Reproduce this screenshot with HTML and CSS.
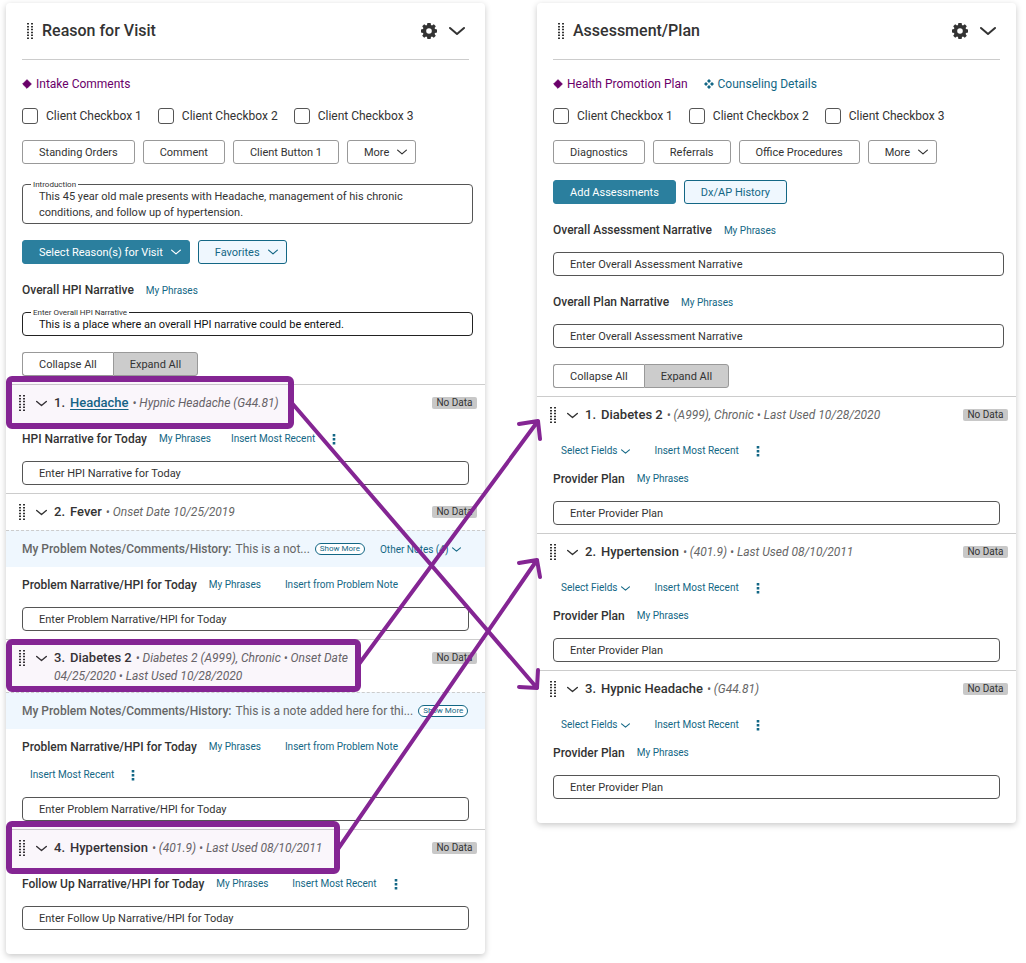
FILE: index.html
```html
<!DOCTYPE html>
<html lang="en">
<head>
  <meta charset="UTF-8">
  <meta name="viewport" content="width=device-width, initial-scale=1.0">
  <title>Reason for Visit - Assessment/Plan</title>
  <link rel="stylesheet" href="styles.css">
</head>
<body>

  <!-- Shared icons -->
  <svg class="sprite" aria-hidden="true">
    <symbol id="drag" viewBox="0 0 6 16">
      <path d="M1 0v16M5 0v16" stroke="currentColor" stroke-width="2" stroke-dasharray="1.6 1.28" fill="none"/>
    </symbol>
    <symbol id="chevron" viewBox="0 0 16 16">
      <path d="M1 5l7 6 7-6" fill="none" stroke="currentColor" stroke-width="2" stroke-linecap="round" stroke-linejoin="round"/>
    </symbol>
    <symbol id="gear" viewBox="0 0 16 16">
      <path fill="currentColor" fill-rule="evenodd" d="M6.4 0h3.2l.4 2 1 .4 1.8-1.2 2 2L13.6 5l.4 1 2 .4v3.2l-2 .4-.4 1 1.2 1.8-2 2-1.8-1.2-1 .4-.4 2H6.4L6 14l-1-.4-1.8 1.2-2-2L2.4 11 2 10l-2-.4V6.4L2 6l.4-1-1.2-1.8 2-2L5 2.4 6 2zM8 5.2a2.8 2.8 0 1 0 0 5.6 2.8 2.8 0 0 0 0-5.6z"/>
    </symbol>
    <symbol id="diamond" viewBox="0 0 10 10">
      <path fill="currentColor" stroke="currentColor" stroke-linejoin="round" d="M5 .7L9.3 5 5 9.3.7 5z"/>
    </symbol>
    <symbol id="diamonds" viewBox="0 0 10 10">
      <path fill="currentColor" d="M5 0l2 2-2 2-2-2zM8 3l2 2-2 2-2-2zM5 6l2 2-2 2-2-2zM2 3l2 2-2 2-2-2z"/>
    </symbol>
    <symbol id="kebab" viewBox="0 0 4 12">
      <path fill="currentColor" d="M.7 1h2.6v2.4H.7zM.7 5h2.6v2.4H.7zM.7 9h2.6v2.4H.7z"/>
    </symbol>
  </svg>

  <main class="board">

    <!-- Reason for Visit -->
    <section class="panel">
      <header class="panel-header">
        <svg class="drag"><use href="#drag"/></svg>
        <h1>Reason for Visit</h1>
        <button class="icon-btn" aria-label="Settings"><svg><use href="#gear"/></svg></button>
        <button class="icon-btn" aria-label="Collapse panel"><svg><use href="#chevron"/></svg></button>
      </header>

      <div class="panel-body">
        <div class="tags">
          <a href="#" class="tag purple"><svg><use href="#diamond"/></svg>Intake Comments</a>
        </div>
        <div class="checks">
          <label><input type="checkbox">Client Checkbox 1</label>
          <label><input type="checkbox">Client Checkbox 2</label>
          <label><input type="checkbox">Client Checkbox 3</label>
        </div>
        <div class="buttons">
          <button class="btn">Standing Orders</button>
          <button class="btn">Comment</button>
          <button class="btn">Client Button 1</button>
          <button class="btn has-menu">More<svg><use href="#chevron"/></svg></button>
        </div>
        <div class="field intro">
          <label for="introduction">Introduction</label>
          <textarea id="introduction" rows="2">This 45 year old male presents with Headache, management of his chronic conditions, and follow up of hypertension.</textarea>
        </div>
        <div class="buttons">
          <button class="btn primary has-menu">Select Reason(s) for Visit<svg><use href="#chevron"/></svg></button>
          <button class="btn secondary has-menu">Favorites<svg><use href="#chevron"/></svg></button>
        </div>
        <div class="narrative">
          <div class="narrative-title"><h2>Overall HPI Narrative</h2><a href="#" class="link">My Phrases</a></div>
          <div class="field dark">
            <label for="overall-hpi">Enter Overall HPI Narrative</label>
            <input type="text" id="overall-hpi" value="This is a place where an overall HPI narrative could be entered.">
          </div>
        </div>
        <div class="toggle">
          <button class="btn">Collapse All</button>
          <button class="btn selected">Expand All</button>
        </div>
      </div>

      <article class="item">
        <div class="item-head">
          <svg class="drag"><use href="#drag"/></svg>
          <button class="expand" aria-label="Toggle Headache"><svg><use href="#chevron"/></svg></button>
          <p class="item-text"><b>1.</b><a href="#" class="name">Headache</a> <i>• Hypnic Headache (G44.81)</i></p>
          <span class="badge">No Data</span>
        </div>
        <div class="tools tight">
          <label class="title" for="hpi-1">HPI Narrative for Today</label>
          <a href="#" class="link">My Phrases</a>
          <span class="insert"><a href="#" class="link">Insert Most Recent</a><button class="kebab" aria-label="More actions"><svg><use href="#kebab"/></svg></button></span>
        </div>
        <input type="text" id="hpi-1" placeholder="Enter HPI Narrative for Today">
      </article>

      <article class="item">
        <div class="item-head">
          <svg class="drag"><use href="#drag"/></svg>
          <button class="expand" aria-label="Toggle Fever"><svg><use href="#chevron"/></svg></button>
          <p class="item-text"><b>2.</b><b class="name">Fever</b> <i>• Onset Date 10/25/2019</i></p>
          <span class="badge">No Data</span>
        </div>
        <div class="notes">
          <b>My Problem Notes/Comments/History:</b>
          <span>This is a not...</span>
          <button class="show-more">Show More</button>
          <button class="link menu-link other">Other Notes (4)<svg><use href="#chevron"/></svg></button>
        </div>
        <div class="tools">
          <label class="title" for="hpi-2">Problem Narrative/HPI for Today</label>
          <a href="#" class="link">My Phrases</a>
          <a href="#" class="link">Insert from Problem Note</a>
        </div>
        <input type="text" id="hpi-2" placeholder="Enter Problem Narrative/HPI for Today">
      </article>

      <article class="item">
        <div class="item-head">
          <svg class="drag"><use href="#drag"/></svg>
          <button class="expand" aria-label="Toggle Diabetes 2"><svg><use href="#chevron"/></svg></button>
          <p class="item-text"><b>3.</b><b class="name">Diabetes 2</b> <i>• Diabetes 2 (A999), Chronic • Onset Date</i> <i>04/25/2020 • Last Used 10/28/2020</i></p>
          <span class="badge">No Data</span>
        </div>
        <div class="notes">
          <b>My Problem Notes/Comments/History:</b>
          <span>This is a note added here for thi...</span>
          <button class="show-more">Show More</button>
        </div>
        <div class="tools">
          <label class="title" for="hpi-3">Problem Narrative/HPI for Today</label>
          <a href="#" class="link">My Phrases</a>
          <a href="#" class="link">Insert from Problem Note</a>
          <span class="insert"><a href="#" class="link">Insert Most Recent</a><button class="kebab" aria-label="More actions"><svg><use href="#kebab"/></svg></button></span>
        </div>
        <input type="text" id="hpi-3" placeholder="Enter Problem Narrative/HPI for Today">
      </article>

      <article class="item">
        <div class="item-head">
          <svg class="drag"><use href="#drag"/></svg>
          <button class="expand" aria-label="Toggle Hypertension"><svg><use href="#chevron"/></svg></button>
          <p class="item-text"><b>4.</b><b class="name">Hypertension</b> <i>• (401.9) • Last Used 08/10/2011</i></p>
          <span class="badge">No Data</span>
        </div>
        <div class="tools">
          <label class="title" for="hpi-4">Follow Up Narrative/HPI for Today</label>
          <a href="#" class="link">My Phrases</a>
          <span class="insert"><a href="#" class="link">Insert Most Recent</a><button class="kebab" aria-label="More actions"><svg><use href="#kebab"/></svg></button></span>
        </div>
        <input type="text" id="hpi-4" placeholder="Enter Follow Up Narrative/HPI for Today">
      </article>
    </section>

    <!-- Assessment/Plan -->
    <section class="panel">
      <header class="panel-header">
        <svg class="drag"><use href="#drag"/></svg>
        <h1>Assessment/Plan</h1>
        <button class="icon-btn" aria-label="Settings"><svg><use href="#gear"/></svg></button>
        <button class="icon-btn" aria-label="Collapse panel"><svg><use href="#chevron"/></svg></button>
      </header>

      <div class="panel-body">
        <div class="tags">
          <a href="#" class="tag purple"><svg><use href="#diamond"/></svg>Health Promotion Plan</a>
          <a href="#" class="tag"><svg><use href="#diamonds"/></svg>Counseling Details</a>
        </div>
        <div class="checks">
          <label><input type="checkbox">Client Checkbox 1</label>
          <label><input type="checkbox">Client Checkbox 2</label>
          <label><input type="checkbox">Client Checkbox 3</label>
        </div>
        <div class="buttons">
          <button class="btn">Diagnostics</button>
          <button class="btn">Referrals</button>
          <button class="btn">Office Procedures</button>
          <button class="btn has-menu">More<svg><use href="#chevron"/></svg></button>
        </div>
        <div class="buttons">
          <button class="btn primary">Add Assessments</button>
          <button class="btn secondary">Dx/AP History</button>
        </div>
        <div class="narrative">
          <div class="narrative-title"><label class="title" for="overall-assessment">Overall Assessment Narrative</label><a href="#" class="link">My Phrases</a></div>
          <div class="field">
            <input type="text" id="overall-assessment" placeholder="Enter Overall Assessment Narrative">
          </div>
        </div>
        <div class="narrative">
          <div class="narrative-title"><label class="title" for="overall-plan">Overall Plan Narrative</label><a href="#" class="link">My Phrases</a></div>
          <div class="field">
            <input type="text" id="overall-plan" placeholder="Enter Overall Assessment Narrative">
          </div>
        </div>
        <div class="toggle">
          <button class="btn">Collapse All</button>
          <button class="btn selected">Expand All</button>
        </div>
      </div>

      <article class="item">
        <div class="item-head">
          <svg class="drag"><use href="#drag"/></svg>
          <button class="expand" aria-label="Toggle Diabetes 2"><svg><use href="#chevron"/></svg></button>
          <p class="item-text"><b>1.</b><b class="name">Diabetes 2</b> <i>• (A999), Chronic • Last Used 10/28/2020</i></p>
          <span class="badge">No Data</span>
        </div>
        <div class="tools">
          <div class="tools-row">
            <button class="link menu-link">Select Fields<svg><use href="#chevron"/></svg></button>
            <span class="insert"><a href="#" class="link">Insert Most Recent</a><button class="kebab" aria-label="More actions"><svg><use href="#kebab"/></svg></button></span>
          </div>
          <label class="title" for="plan-1">Provider Plan</label>
          <a href="#" class="link">My Phrases</a>
        </div>
        <input type="text" id="plan-1" placeholder="Enter Provider Plan">
      </article>

      <article class="item">
        <div class="item-head">
          <svg class="drag"><use href="#drag"/></svg>
          <button class="expand" aria-label="Toggle Hypertension"><svg><use href="#chevron"/></svg></button>
          <p class="item-text"><b>2.</b><b class="name">Hypertension</b> <i>• (401.9) • Last Used 08/10/2011</i></p>
          <span class="badge">No Data</span>
        </div>
        <div class="tools">
          <div class="tools-row">
            <button class="link menu-link">Select Fields<svg><use href="#chevron"/></svg></button>
            <span class="insert"><a href="#" class="link">Insert Most Recent</a><button class="kebab" aria-label="More actions"><svg><use href="#kebab"/></svg></button></span>
          </div>
          <label class="title" for="plan-2">Provider Plan</label>
          <a href="#" class="link">My Phrases</a>
        </div>
        <input type="text" id="plan-2" placeholder="Enter Provider Plan">
      </article>

      <article class="item">
        <div class="item-head">
          <svg class="drag"><use href="#drag"/></svg>
          <button class="expand" aria-label="Toggle Hypnic Headache"><svg><use href="#chevron"/></svg></button>
          <p class="item-text"><b>3.</b><b class="name">Hypnic Headache</b> <i>• (G44.81)</i></p>
          <span class="badge">No Data</span>
        </div>
        <div class="tools">
          <div class="tools-row">
            <button class="link menu-link">Select Fields<svg><use href="#chevron"/></svg></button>
            <span class="insert"><a href="#" class="link">Insert Most Recent</a><button class="kebab" aria-label="More actions"><svg><use href="#kebab"/></svg></button></span>
          </div>
          <label class="title" for="plan-3">Provider Plan</label>
          <a href="#" class="link">My Phrases</a>
        </div>
        <input type="text" id="plan-3" placeholder="Enter Provider Plan">
      </article>
    </section>
  </main>

  <!-- Callouts linking each reason to its assessment -->
  <svg class="callouts" width="1026" height="963" aria-hidden="true">
    <g class="callout-box">
      <rect x="9" y="379" width="282" height="47" rx="3"/>
      <rect x="9" y="642" width="349" height="47" rx="3"/>
      <rect x="9" y="824" width="328" height="47" rx="3"/>
    </g>
    <g class="callout-arrow">
      <path d="M291 402L537 688M519 687l18 1 1-18"/>
      <path d="M359 664L538 421M519 424l19-3 2 18"/>
      <path d="M338 849L537 560M519 563l18-3 3 17"/>
    </g>
  </svg>

</body>
</html>
```
FILE: styles.css
```css
* {
  box-sizing: border-box;
}
body {
  margin: 0;
  position: relative;
  background: #fff;
  color: #333;
  font-family: Roboto, "Liberation Sans", sans-serif;
  font-size: 12px;
}
button, input, textarea {
  font-family: inherit;
  color: inherit;
}
button {
  cursor: pointer;
}
a {
  text-decoration: none;
}
h1, h2, p {
  margin: 0;
}
.sprite {
  position: absolute;
  width: 0;
  height: 0;
}
.board {
  display: grid;
  grid-template-columns: 1fr 1fr;
  align-items: start;
  gap: 52px;
  padding: 3px 10px 9px 6px;
}
.panel {
  background: #fff;
  border-radius: 4px;
  box-shadow: 0 2px 6px rgba(0, 0, 0, 0.22);
  padding-bottom: 16px;
}

/* Panel header */
.panel-header {
  display: flex;
  align-items: center;
  height: 57px;
  margin: 0 16px;
  padding: 0 4px 1px 5px;
  border-bottom: 1px solid #ccc;
}
.panel-header h1 {
  flex: 1;
  margin-left: 9px;
  font-size: 16px;
  line-height: 18px;
  font-weight: 500;
}
.drag {
  width: 6px;
  height: 16px;
  flex: none;
}
.icon-btn {
  display: flex;
  margin-left: 12px;
  padding: 0;
  border: 0;
  background: none;
}
.icon-btn svg {
  width: 16px;
  height: 16px;
}

/* Panel body */
.panel-body {
  display: flex;
  flex-direction: column;
  gap: 16px;
  padding: 16px 12px 8px 16px;
}
.tags, .checks {
  display: flex;
  gap: 16px;
}
.tag, .checks label {
  display: flex;
  align-items: center;
  height: 16px;
  font-size: 12px;
}
.tag {
  gap: 4px;
  color: #136785;
}
.tag.purple {
  color: #6a006a;
}
.tag svg {
  width: 10px;
  height: 10px;
}
.checks label {
  gap: 8px;
}
.checks input {
  appearance: none;
  width: 16px;
  height: 16px;
  margin: 0;
  border: 1px solid #555;
  border-radius: 3px;
}
.checks input:checked {
  background: #2b7f9e;
}
.buttons {
  display: flex;
  gap: 8px;
}
.btn {
  display: flex;
  align-items: center;
  gap: 8px;
  height: 24px;
  padding: 0 16px;
  border: 1px solid #999;
  border-radius: 3px;
  background: #fff;
  font-size: 11px;
}
.btn.has-menu {
  padding-right: 8px;
}
.btn svg {
  width: 10px;
  height: 10px;
}
.expand svg {
  width: 11px;
  height: 11px;
}
.btn.primary {
  border-color: #2b7f9e;
  background: #2b7f9e;
  color: #fff;
}
.btn.secondary {
  border-color: #136785;
  background: #eff7fe;
  color: #136785;
}
.toggle {
  display: flex;
}
.toggle .btn:first-child {
  border-right: 0;
  border-radius: 3px 0 0 3px;
}
.toggle .selected {
  border-radius: 0 3px 3px 0;
  background: #ccc;
}

/* Text fields */
input[type="text"], textarea {
  display: block;
  width: 100%;
  height: 24px;
  padding: 0 16px;
  border: 1px solid #555;
  border-radius: 4px;
  background: #fff;
  font-size: 11px;
}
textarea {
  height: 40px;
  padding: 4px 56px 0 16px;
  line-height: 16px;
  resize: none;
  overflow: hidden;
}
::placeholder {
  color: #333;
  opacity: 1;
}
.field {
  position: relative;
}
.field.intro {
  margin-top: 4px;
}
/* label sits on the top border */
.field label {
  position: absolute;
  top: -4px;
  left: 9px;
  padding: 0 2px;
  background: #fff;
  font-size: 8px;
  line-height: 10px;
}
.field.dark input {
  border-color: #222;
  color: #111;
}
.narrative-title {
  display: flex;
  align-items: center;
  gap: 12px;
  height: 20px;
  margin-bottom: 12px;
}
.title, .narrative-title h2 {
  font-size: 12px;
  font-weight: 500;
}
.link {
  padding: 0;
  border: 0;
  background: none;
  color: #136785;
  font-size: 10px;
}

/* Problem items */
.item {
  border-top: 1px solid #ccc;
  padding-bottom: 8px;
}
.item-head {
  display: flex;
  align-items: flex-start;
  min-height: 36px;
  padding: 9px 8px 7px 13px;
}
.item-head .drag {
  margin-top: 1px;
}
.expand {
  display: flex;
  align-items: center;
  height: 18px;
  margin: 0 7px 0 11px;
  padding: 0;
  border: 0;
  background: none;
}
.item-text {
  flex: 1;
  font-size: 12px;
  line-height: 18px;
}
.item-text b {
  font-size: 13px;
  font-weight: 500;
}
.item-text .name {
  margin: 0 1px 0 5px;
}
.item-text a {
  color: #136785;
  font-size: 13px;
  font-weight: 500;
  text-decoration: underline;
  text-underline-offset: 2px;
}
.item-text i {
  color: #666;
}
.badge {
  min-width: 45px;
  margin: 3px 0 0 24px;
  padding: 0 4px;
  border-radius: 2px;
  background: #c8c8c8;
  font-size: 10px;
  line-height: 12px;
  text-align: center;
}
.notes {
  display: flex;
  align-items: center;
  height: 37px;
  padding: 0 16px;
  border-top: 1px dashed #ccc;
  background: #eff7fe;
  color: #666;
  white-space: nowrap;
}
.notes b {
  margin-right: 4px;
  font-weight: 500;
}
.show-more {
  height: 12px;
  margin-left: 5px;
  padding: 0 4px;
  border: 1px solid #136785;
  border-radius: 6px;
  background: #fff;
  color: #136785;
  font-size: 8px;
  line-height: 10px;
}
.notes .other {
  margin-left: 15px;
}
.menu-link {
  display: flex;
  align-items: center;
  gap: 4px;
}
.menu-link svg {
  width: 9px;
  height: 9px;
}
.tools {
  display: flex;
  flex-wrap: wrap;
  gap: 8px;
  padding: 8px 16px;
  margin-bottom: 4px;
  line-height: 20px;
}
.tools .title {
  margin-right: -4px;
}
.tools .link {
  padding: 0 8px;
  line-height: 20px;
}
.tools.tight .insert {
  margin-left: -4px;
}
.tools-row {
  display: flex;
  flex-basis: 100%;
  gap: 8px;
}
.insert {
  display: flex;
  align-items: center;
}
.kebab {
  display: flex;
  padding: 0 9px;
  border: 0;
  background: none;
  color: #136785;
}
.kebab svg {
  width: 4px;
  height: 12px;
}
.item > input[type="text"] {
  width: auto;
  min-width: calc(100% - 32px);
  margin: 0 16px;
}

/* Callouts */
.callouts {
  position: absolute;
  top: 0;
  left: 0;
  pointer-events: none;
}
.callout-box {
  fill: rgba(132, 37, 147, 0.04);
  stroke: #842593;
  stroke-width: 6;
}
.callout-arrow {
  fill: none;
  stroke: #842593;
  stroke-width: 4;
  stroke-linecap: round;
  stroke-linejoin: round;
}
```
